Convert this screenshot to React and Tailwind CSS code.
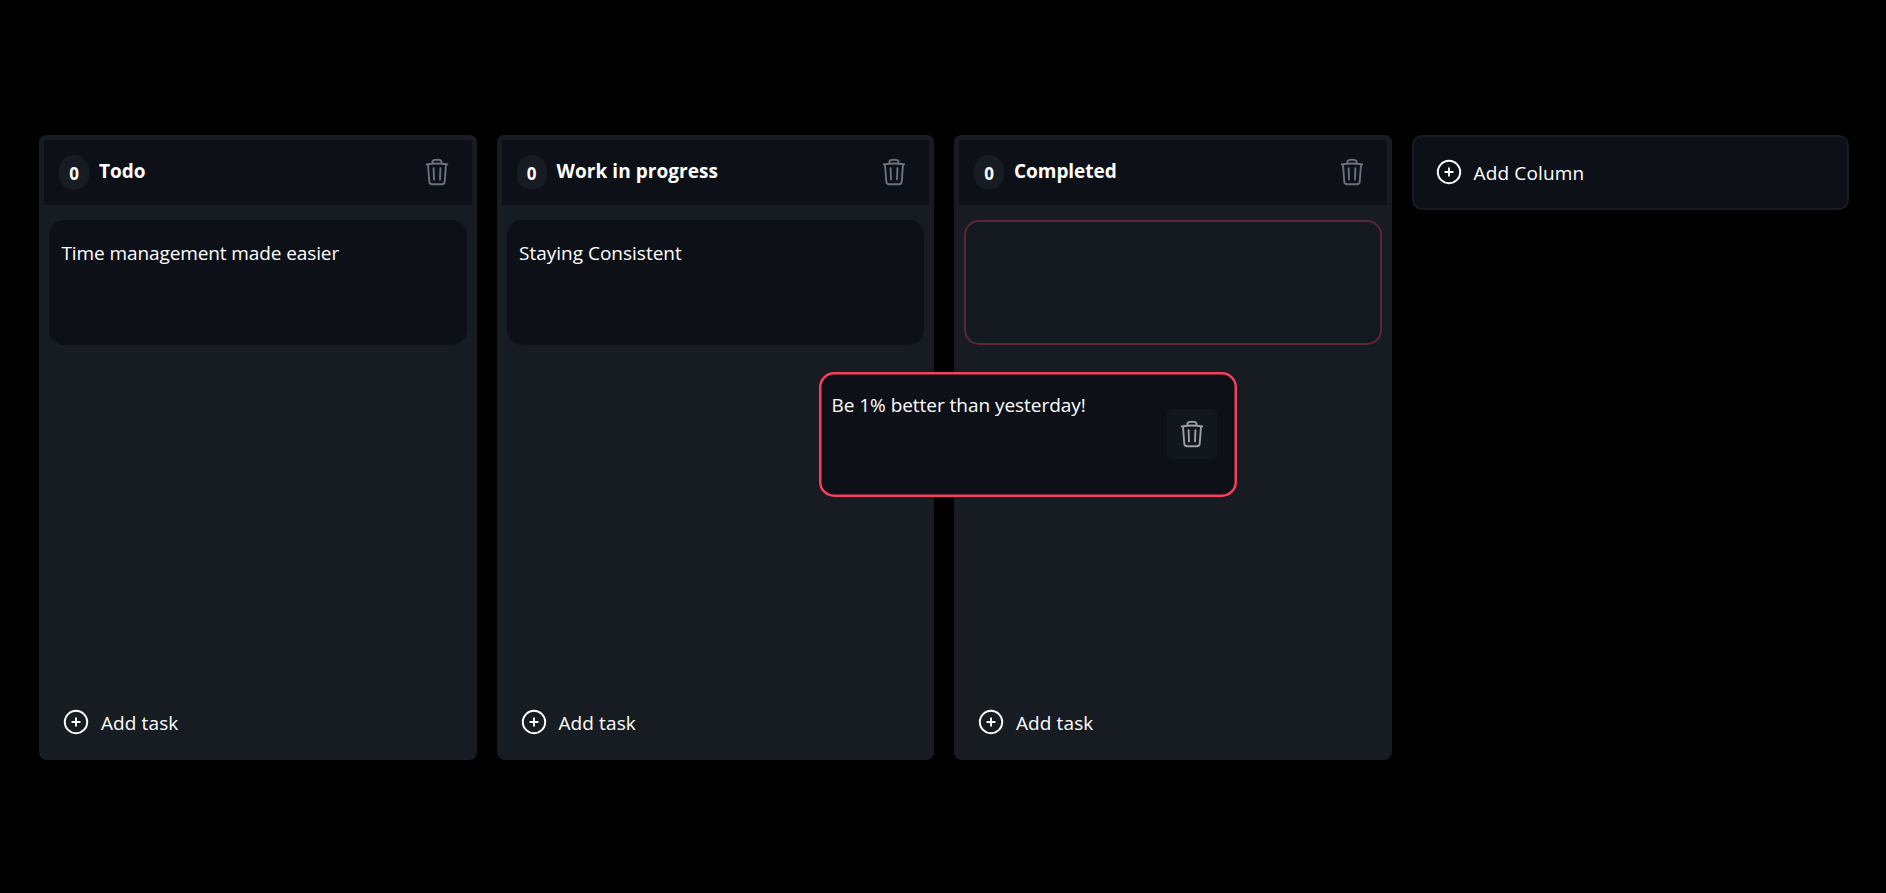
import { HiOutlineTrash, HiOutlinePlusCircle } from "react-icons/hi2";

const columns = [
  { title: "Todo", tracking: "tracking-[-0.05px]", task: "Time management made easier", taskTracking: "tracking-[-0.1px]" },
  { title: "Work in progress", tracking: "tracking-[0.06px]", task: "Staying Consistent", taskTracking: "tracking-[0px]" },
  { title: "Completed", tracking: "tracking-[-0.05px]", task: null },
];

function Column({ title, tracking, task, taskTracking }) {
  return (
    <section className="flex h-[625px] w-[437.5px] shrink-0 flex-col rounded-[7.5px] bg-[#161c22]">
      <header className="flex h-[75px] items-center justify-between rounded-t-[7.5px] border-5 border-[#161c22] bg-[#0d1117] px-[15px]">
        <div className="flex items-center gap-2.5">
          <span className="flex h-[35px] w-[30px] items-center justify-center rounded-full bg-[#161c22] pt-0.5 text-[17px] font-bold">
            0
          </span>
          <h2 className={`-mt-0.5 text-[19px] font-bold ${tracking}`}>{title}</h2>
        </div>
        <HiOutlineTrash className="mr-[5px] mb-px size-[30px] text-gray-500" />
      </header>
      <div className="flex grow flex-col p-2.5">
        {task ? (
          <div className={`h-[125px] rounded-[15px] bg-[#0d1117] px-[12.5px] pt-[17.5px] text-[19px] leading-[30px] ${taskTracking}`}>
            {task}
          </div>
        ) : (
          <div className="h-[125px] rounded-[15px] border-2 border-[#5a2834] bg-[#13191f]" />
        )}
      </div>
      <button className="flex h-[75px] items-center gap-2.5 px-[22px] text-[19px] tracking-[0.1px]">
        <HiOutlinePlusCircle className="mb-px size-[30px]" />
        <span className="pt-px">Add task</span>
      </button>
    </section>
  );
}

export default function App() {
  return (
    <main
      className="relative flex h-[893px] w-[1886px] items-start gap-5 overflow-hidden bg-black pt-[135px] pl-[39px] text-white"
      style={{ fontFamily: '"Open Sans", "Noto Sans", sans-serif' }}
    >
      {columns.map((c) => (
        <Column key={c.title} {...c} />
      ))}
      <button className="flex h-[75px] w-[437.5px] shrink-0 items-center gap-2.5 rounded-[10px] border-2 border-[#161c22] bg-[#0d1117] px-5 text-[19px] tracking-[0.15px]">
        <HiOutlinePlusCircle className="mb-px size-[30px]" />
        <span className="pt-px">Add Column</span>
      </button>
      <div className="absolute top-[372px] left-[819px] flex h-[125px] w-[418px] items-center justify-between rounded-[15px] bg-[#0d1117] pr-5 pl-[12.5px] text-[19px] tracking-[-0.04px] inset-ring-[2.5px] inset-ring-[#f43f5e]">
        <p className="self-start pt-[18px] leading-[30px]">Be 1% better than yesterday!</p>
        <span className="mb-px flex size-[50px] items-center justify-center rounded-[5px] bg-[#161c22] opacity-60">
          <HiOutlineTrash className="size-[30px]" />
        </span>
      </div>
    </main>
  );
}
